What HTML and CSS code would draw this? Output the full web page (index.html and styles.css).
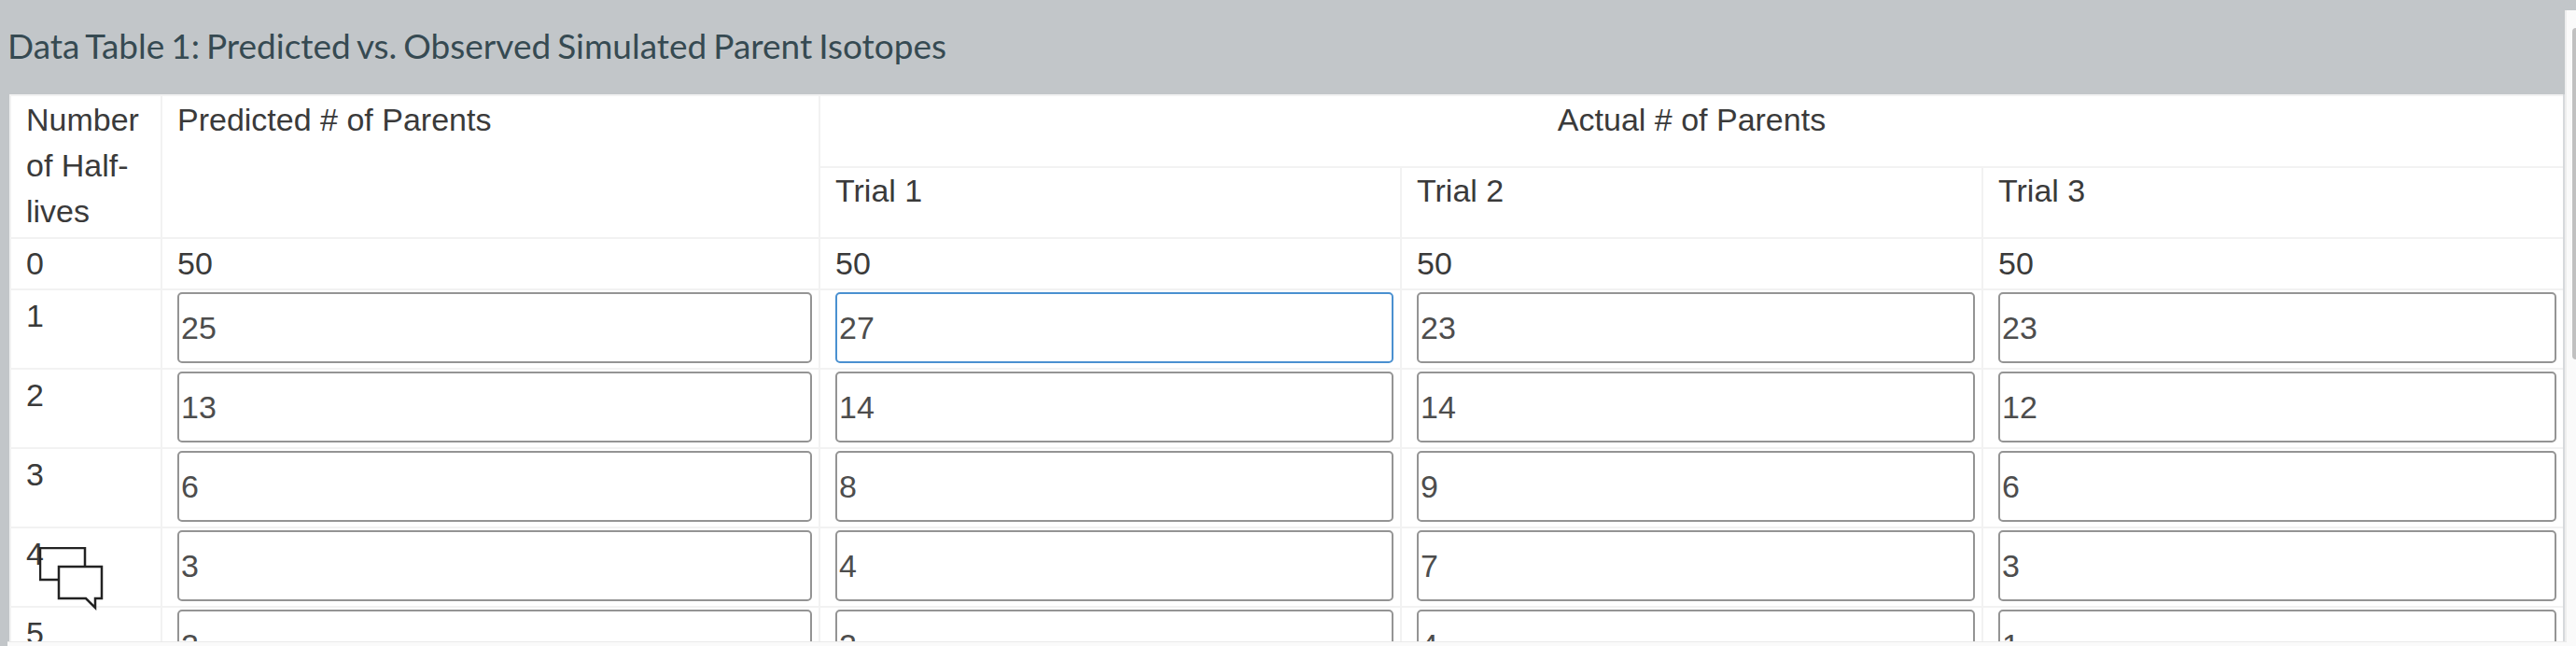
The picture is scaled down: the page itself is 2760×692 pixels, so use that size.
FILE: index.html
```html
<!DOCTYPE html>
<html lang="en">
<head>
<meta charset="utf-8">
<title>Data Table 1</title>
<link rel="stylesheet" href="styles.css">
</head>
<body>
<div class="page">
  <h2 class="title">Data Table 1: Predicted vs. Observed Simulated Parent Isotopes</h2>
  <div class="table-wrap">
    <table class="data">
      <colgroup>
        <col class="c-n"><col class="c-p"><col class="c-t"><col class="c-t"><col class="c-t">
      </colgroup>
      <tbody>
        <tr class="h1"><td rowspan="2">Number of Half-lives</td><td rowspan="2">Predicted # of Parents</td><td colspan="3" class="center">Actual # of Parents</td></tr>
        <tr class="h2"><td>Trial 1</td><td>Trial 2</td><td>Trial 3</td></tr>
        <tr class="r0"><td>0</td><td>50</td><td>50</td><td>50</td><td>50</td></tr>
        <tr class="r"><td class="num">1</td><td><input class="in" value="25"></td><td><input class="in focus" value="27"></td><td><input class="in" value="23"></td><td><input class="in" value="23"></td></tr>
        <tr class="r"><td class="num">2</td><td><input class="in" value="13"></td><td><input class="in" value="14"></td><td><input class="in" value="14"></td><td><input class="in" value="12"></td></tr>
        <tr class="r"><td class="num">3</td><td><input class="in" value="6"></td><td><input class="in" value="8"></td><td><input class="in" value="9"></td><td><input class="in" value="6"></td></tr>
        <tr class="r"><td class="num">4</td><td><input class="in" value="3"></td><td><input class="in" value="4"></td><td><input class="in" value="7"></td><td><input class="in" value="3"></td></tr>
        <tr class="r"><td class="num">5</td><td><input class="in" value="2"></td><td><input class="in" value="2"></td><td><input class="in" value="4"></td><td><input class="in" value="1"></td></tr>
      </tbody>
    </table>
    <svg class="chat" width="70" height="68" viewBox="0 0 70 68" aria-hidden="true">
      <path d="M21 35H1V1H49V21" fill="none" stroke="#222" stroke-width="2.5"/>
      <path d="M21 21H67V55H60V65L50 55H21Z" fill="#fff" stroke="#222" stroke-width="2.5"/>
    </svg>
  </div>
  <div class="vscroll"><div class="thumb"></div></div>
  <div class="hscroll"></div>
</div>
</body>
</html>
```
FILE: styles.css
```css
* { box-sizing: border-box; }
html, body { margin: 0; padding: 0; height: 692px; overflow: hidden; background: #c2c6c9; }
.page { position: relative; width: 2760px; height: 692px; overflow: hidden; background: #c2c6c9; }
.title {
  margin: 0; height: 101px; padding: 29px 0 0 8px;
  font: 400 37px/40px Lato, sans-serif; color: #364a52; word-spacing: -2.5px;
}
.table-wrap { position: relative; width: 2738px; height: 591px; margin-left: 10px; overflow: hidden; background: #fff; border-right: 2px solid #d6d9dc; }
.data { width: 2736px; border-collapse: collapse; table-layout: fixed; font: 34px/49px "Liberation Sans", sans-serif; color: #3a3a3a; background: #fff; }
.c-n { width: 162px; }
.c-p { width: 705px; }
.c-t { width: 623px; }
.data td { border: 2px solid #f2f2f2; padding: 0 7px 0 16px; vertical-align: top; }
.h1 td { padding-top: 1px; }
.data .center { text-align: center; padding-right: 16px; }
.h1 { height: 77px; }
.h2 { height: 76px; }
.r0 { height: 55px; }
.r0 td { padding-top: 2px; }
.r { height: 85px; }
.r td { padding-top: 2px; padding-bottom: 3px; }
.data .num { padding-top: 3px; }
.in {
  display: block; width: 100%; height: 76px; margin: 0; padding: 0 2px;
  border: 2px solid #949494; border-radius: 5px; background: #fff;
  font: 34px "Liberation Sans", sans-serif; color: #4d4d4d; outline: none;
}
.focus { border-color: #4a90d0; }
.chat { position: absolute; left: 32px; top: 485px; }
.vscroll { position: absolute; left: 2748px; top: 11px; width: 12px; height: 681px; background: #fafafa; border-left: 2px solid #eee; }
.thumb { position: absolute; left: 6px; top: 19px; width: 4px; height: 355px; background: #c1c1c1; border-radius: 4px 0 0 4px; }
.hscroll { position: absolute; left: 8px; top: 687px; width: 2742px; height: 5px; background: #fafafa; border-top: 1px solid #eaeaea; }
```
